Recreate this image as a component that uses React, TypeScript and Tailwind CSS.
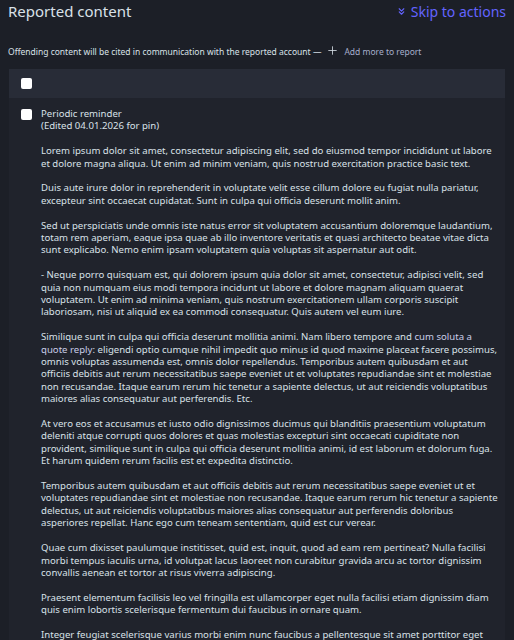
import { ChevronsDown, Plus } from "lucide-react"

const paragraphs = [
  "Lorem ipsum dolor sit amet, consectetur adipiscing elit, sed do eiusmod tempor incididunt ut labore et dolore magna aliqua. Ut enim ad minim veniam, quis nostrud exercitation practice basic text.",
  "Duis aute irure dolor in reprehenderit in voluptate velit esse cillum dolore eu fugiat nulla pariatur, excepteur sint occaecat cupidatat. Sunt in culpa qui officia deserunt mollit anim.",
  "Sed ut perspiciatis unde omnis iste natus error sit voluptatem accusantium doloremque laudantium, totam rem aperiam, eaque ipsa quae ab illo inventore veritatis et quasi architecto beatae vitae dicta sunt explicabo. Nemo enim ipsam voluptatem quia voluptas sit aspernatur aut odit.",
  "- Neque porro quisquam est, qui dolorem ipsum quia dolor sit amet, consectetur, adipisci velit, sed quia non numquam eius modi tempora incidunt ut labore et dolore magnam aliquam quaerat voluptatem. Ut enim ad minima veniam, quis nostrum exercitationem ullam corporis suscipit laboriosam, nisi ut aliquid ex ea commodi consequatur. Quis autem vel eum iure.",
  null,
  "At vero eos et accusamus et iusto odio dignissimos ducimus qui blanditiis praesentium voluptatum deleniti atque corrupti quos dolores et quas molestias excepturi sint occaecati cupiditate non provident, similique sunt in culpa qui officia deserunt mollitia animi, id est laborum et dolorum fuga. Et harum quidem rerum facilis est et expedita distinctio.",
  "Temporibus autem quibusdam et aut officiis debitis aut rerum necessitatibus saepe eveniet ut et voluptates repudiandae sint et molestiae non recusandae. Itaque earum rerum hic tenetur a sapiente delectus, ut aut reiciendis voluptatibus maiores alias consequatur aut perferendis doloribus asperiores repellat. Hanc ego cum teneam sententiam, quid est cur verear.",
  "Quae cum dixisset paulumque institisset, quid est, inquit, quod ad eam rem pertineat? Nulla facilisi morbi tempus iaculis urna, id volutpat lacus laoreet non curabitur gravida arcu ac tortor dignissim convallis aenean et tortor at risus viverra adipiscing.",
  "Praesent elementum facilisis leo vel fringilla est ullamcorper eget nulla facilisi etiam dignissim diam quis enim lobortis scelerisque fermentum dui faucibus in ornare quam.",
  "Integer feugiat scelerisque varius morbi enim nunc faucibus a pellentesque sit amet porttitor eget dolor morbi non arcu risus quis varius quam quisque id diam vel quam elementum pulvinar.",
]

function Box() {
  return <span className="block w-[11px] h-[11px] bg-white rounded-[2px] shrink-0" />
}

export default function App() {
  return (
    <div className="min-h-screen bg-[#1c1f27] text-[#d9e1e8] font-['Noto_Sans',sans-serif] px-2 pb-6">
      <div className="flex items-center justify-between h-[23px]">
        <h2 className="text-[15px] text-[#d9e1e8]">Reported content</h2>
        <a className="flex items-center gap-1 text-[14px] text-[#6364ff]">
          <ChevronsDown size={11} strokeWidth={2.5} />
          Skip to actions
        </a>
      </div>
      <p className="mt-[21px] text-[8.5px] text-[#d9e1e8] flex items-center">
        Offending content will be cited in communication with the reported account —
        <Plus size={13} strokeWidth={1.5} className="mx-[5px] mb-[4px] text-[#d9e1e8]" />
        <span className="text-[#a6aecb]">Add more to report</span>
      </p>
      <div className="mt-[8px] ml-[1px] mr-[1px] bg-[#20232c]">
        <div className="bg-[#282c37] h-[29px] flex items-center pl-[12px]">
          <Box />
        </div>
        <div className="flex gap-[9px] pl-[12px] pr-[6px] pt-[10px] text-[9.6px] leading-[12.4px]">
          <div className="pt-[1px]"><Box /></div>
          <div className="flex flex-col gap-[12.4px]">
            <p>
              Periodic reminder
              <br />
              (Edited 04.01.2026 for pin)
            </p>
            {paragraphs.map((t, i) =>
              t === null ? (
                <p key={i}>
                  Similique sunt in culpa qui officia deserunt mollitia animi. Nam libero tempore and{" "}
                  <span className="text-[#c9cde8]">cum soluta a quote reply</span>: eligendi optio cumque nihil impedit quo minus id quod maxime placeat facere possimus, omnis voluptas assumenda est, omnis dolor repellendus. Temporibus autem quibusdam et aut officiis debitis aut rerum necessitatibus saepe eveniet ut et voluptates repudiandae sint et molestiae non recusandae. Itaque earum rerum hic tenetur a sapiente delectus, ut aut reiciendis voluptatibus maiores alias consequatur aut perferendis. Etc.
                </p>
              ) : (
                <p key={i}>{t}</p>
              )
            )}
          </div>
        </div>
      </div>
    </div>
  )
}
